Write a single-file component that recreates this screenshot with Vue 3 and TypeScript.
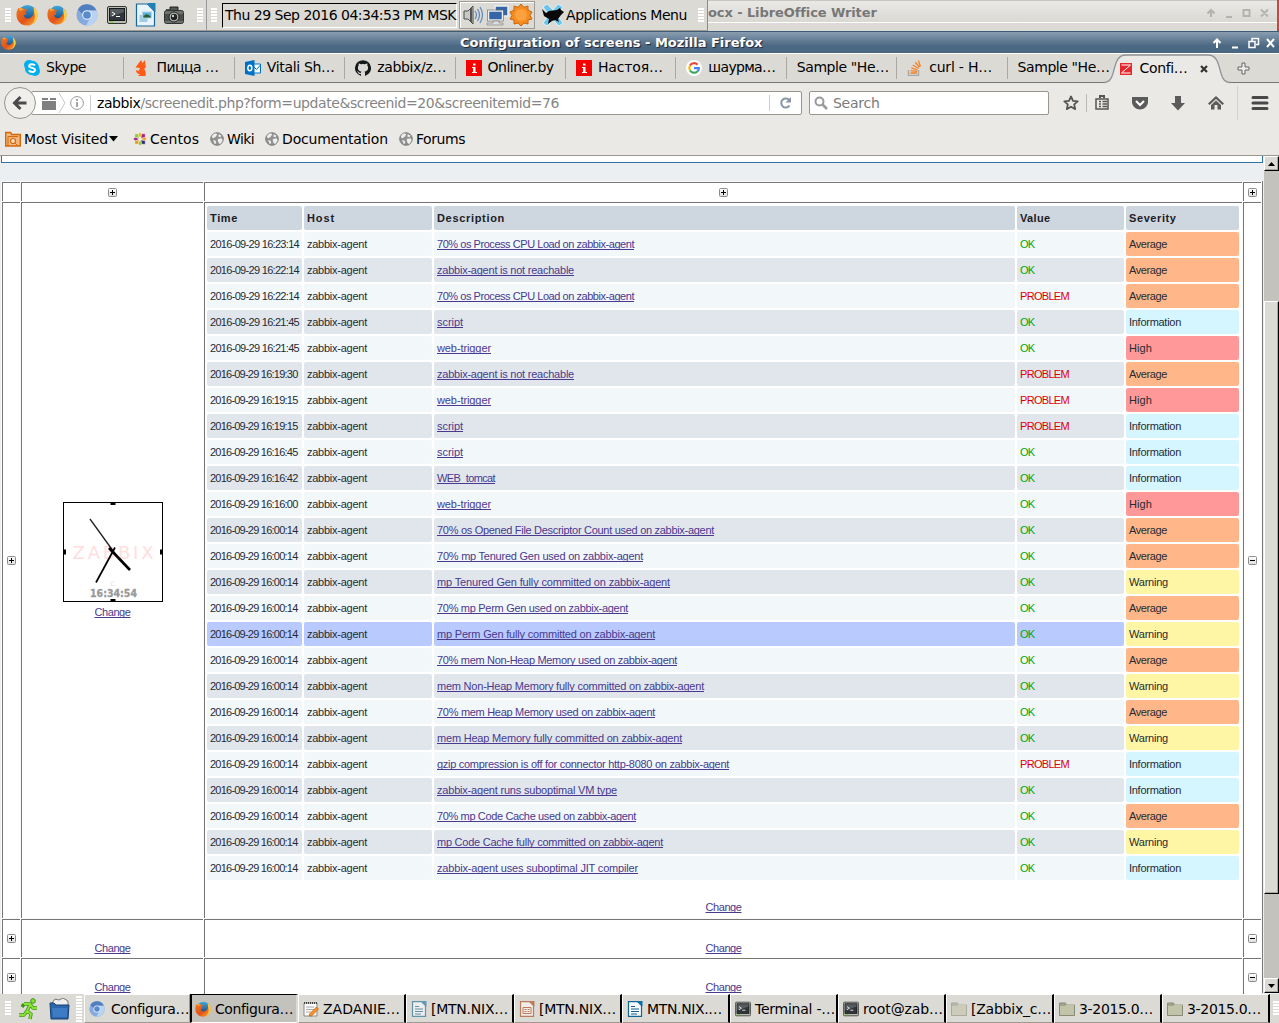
<script setup lang="ts">
interface Tab { icon: string; label: string; w: number }
interface Task { icon: string; label: string; w: number; faded?: boolean; active?: boolean }
interface EventRow { time: string; desc: string; w: number; problem: boolean; sev: Severity }
type Severity = 'Average' | 'Information' | 'High' | 'Warning'

// Adjusts letter spacing so a label takes the given advance width.
const vFit = {
  mounted(el: HTMLElement, binding: { value: number }) {
    const n = (el.textContent || '').length
    const w = el.getBoundingClientRect().width
    if (n && w) el.style.letterSpacing = ((binding.value - w) / n).toFixed(4) + 'px'
  },
}

const launchers = ['firefox', 'firefox', 'chromium', 'terminal', 'impress', 'camera']

const tabs: Tab[] = [
  { icon: 'skype', label: 'Skype', w: 40 },
  { icon: 'fox', label: 'Пицца …', w: 62 },
  { icon: 'outlook', label: 'Vitali Sh…', w: 68 },
  { icon: 'github', label: 'zabbix/z…', w: 69 },
  { icon: 'onliner', label: 'Onliner.by', w: 66 },
  { icon: 'onliner', label: 'Настоя…', w: 65 },
  { icon: 'google', label: 'шаурма…', w: 67 },
  { icon: '', label: 'Sample "He…', w: 92 },
  { icon: 'stack', label: 'curl - H…', w: 63 },
  { icon: '', label: 'Sample "He…', w: 92 },
]

const bookmarks = [
  { icon: 'centos', label: 'Centos', w: 49, x: 17 },
  { icon: 'globe', label: 'Wiki', w: 27, x: 17 },
  { icon: 'globe', label: 'Documentation', w: 106, x: 18 },
  { icon: 'globe', label: 'Forums', w: 49, x: 17 },
]

const tasks: Task[] = [
  { icon: 'chromium', label: 'Configura…', w: 78 },
  { icon: 'firefox', label: 'Configura…', w: 78, active: true },
  { icon: 'notes', label: 'ZADANIE…', w: 77 },
  { icon: 'writer', label: '[MTN.NIX…', w: 77, faded: true },
  { icon: 'impressdoc', label: '[MTN.NIX…', w: 77, faded: true },
  { icon: 'writer', label: 'MTN.NIX.…', w: 75 },
  { icon: 'terminal', label: 'Terminal -…', w: 80 },
  { icon: 'terminal', label: 'root@zab…', w: 80 },
  { icon: 'folder', label: '[Zabbix_c…', w: 80, faded: true },
  { icon: 'folder', label: '3-2015.0…', w: 74 },
  { icon: 'folder', label: '3-2015.0…', w: 74 },
]

const ev = (t: string, desc: string, w: number, sev: Severity, problem = false): EventRow =>
  ({ time: '2016-09-29 ' + t, desc, w, sev, problem })

const events: EventRow[] = [
  ev('16:23:14', '70% os Process CPU Load on zabbix-agent', 197, 'Average'),
  ev('16:22:14', 'zabbix-agent is not reachable', 137, 'Average'),
  ev('16:22:14', '70% os Process CPU Load on zabbix-agent', 197, 'Average', true),
  ev('16:21:45', 'script', 26, 'Information'),
  ev('16:21:45', 'web-trigger', 54, 'High'),
  ev('16:19:30', 'zabbix-agent is not reachable', 137, 'Average', true),
  ev('16:19:15', 'web-trigger', 54, 'High', true),
  ev('16:19:15', 'script', 26, 'Information', true),
  ev('16:16:45', 'script', 26, 'Information'),
  ev('16:16:42', 'WEB_tomcat', 58, 'Information'),
  ev('16:16:00', 'web-trigger', 54, 'High'),
  ev('16:00:14', '70% os Opened File Descriptor Count used on zabbix-agent', 277, 'Average'),
  ev('16:00:14', '70% mp Tenured Gen used on zabbix-agent', 206, 'Average'),
  ev('16:00:14', 'mp Tenured Gen fully committed on zabbix-agent', 233, 'Warning'),
  ev('16:00:14', '70% mp Perm Gen used on zabbix-agent', 191, 'Average'),
  ev('16:00:14', 'mp Perm Gen fully committed on zabbix-agent', 218, 'Warning'),
  ev('16:00:14', '70% mem Non-Heap Memory used on zabbix-agent', 240, 'Average'),
  ev('16:00:14', 'mem Non-Heap Memory fully committed on zabbix-agent', 267, 'Warning'),
  ev('16:00:14', '70% mem Heap Memory used on zabbix-agent', 218, 'Average'),
  ev('16:00:14', 'mem Heap Memory fully committed on zabbix-agent', 245, 'Warning'),
  ev('16:00:14', 'gzip compression is off for connector http-8080 on zabbix-agent', 292, 'Information', true),
  ev('16:00:14', 'zabbix-agent runs suboptimal VM type', 180, 'Information'),
  ev('16:00:14', '70% mp Code Cache used on zabbix-agent', 199, 'Average'),
  ev('16:00:14', 'mp Code Cache fully committed on zabbix-agent', 226, 'Warning'),
  ev('16:00:14', 'zabbix-agent uses suboptimal JIT compiler', 201, 'Information'),
]
const hovered = 15
const sevWidth: Record<Severity, number> = { Average: 38, Information: 52, High: 23, Warning: 39 }
const timeWidth = (t: string) => (t.includes('16:00') || t.includes('16:19') || t.includes('16:16') ? 87.5 : 89)
</script>

<template>
  <svg class="defs" width="0" height="0">
    <defs>
      <linearGradient id="gOr" x1="0" y1="0" x2="1" y2="1"><stop offset="0" stop-color="#ee7b1c" /><stop offset=".55" stop-color="#e4521b" /><stop offset="1" stop-color="#f9b233" /></linearGradient>
      <linearGradient id="gBl" x1="0" y1="0" x2="0" y2="1"><stop offset="0" stop-color="#3fa9dd" /><stop offset="1" stop-color="#15386f" /></linearGradient>
      <linearGradient id="gPm" x1="0" y1="0" x2="0" y2="1"><stop offset="0" stop-color="#fff" /><stop offset="1" stop-color="#ddd" /></linearGradient>
    </defs>
    <symbol id="firefox" viewBox="0 0 24 24">
      <circle cx="12.5" cy="11" r="10" fill="url(#gBl)" />
      <path d="M19 3c3 3 4.600 6 4.400 10C23 19 18 23.500 12 23.500 5 23.500.500 18 .500 12c0-4 1-6 2.500-8l1 2c1-1 2.500-1.200 4-.5 1.500-.5 3 0 4 1.500L10 9c2 1 1 3-1.500 3 0 3 3 4.500 6 3.500 3-1 5-4 5-7z" fill="url(#gOr)" />
      <path d="M19 3c3 3 4.600 6 4.400 10-.4 4-3 8-7 9.500 4-3 5-7 3.500-13z" fill="#fbd23c" />
      <path d="M3 5l1.500 2.500L9 6 5.500 4z" fill="#f9a13a" />
    </symbol>
    <symbol id="chromium" viewBox="0 0 24 24">
      <circle cx="12" cy="12" r="11.500" fill="#85aadd" />
      <path d="M2 6a11.500 11.500 0 0 1 20.300 1H12a5 5 0 0 0-5 4z" fill="#527fc0" />
      <path d="M22.300 7A11.500 11.500 0 0 1 11 23.500l5-9c1.500-2.500.5-6-2-7.500z" fill="#b9d2f2" />
      <circle cx="12" cy="12" r="5.300" fill="#eef4fc" /><circle cx="12" cy="12" r="4.200" fill="#588bce" />
    </symbol>
    <symbol id="terminal" viewBox="0 0 20 20">
      <rect x=".5" y="1.500" width="19" height="17" rx="1.500" fill="#babdb6" stroke="#333631" />
      <rect x="2.500" y="3.500" width="15" height="12" fill="#30353a" stroke="#16191b" />
      <path d="M3 4h14v3L3 12z" fill="#565c60" /><path d="M5 7l3 2-3 2M9 11.500h4" fill="none" stroke="#fff" /><path d="M2.500 17h4" stroke="#73d216" />
    </symbol>
    <symbol id="impress" viewBox="0 0 20 24">
      <path d="M1 1h11l7 7v15H1z" fill="#e8f4fa" stroke="#17679b" stroke-width="1.200" /><path d="M12 0h8v9z" fill="#1b82b8" />
      <rect x="4" y="12" width="8" height="7" fill="#9fcde7" /><rect x="7" y="9" width="9" height="6" fill="#57b3df" stroke="#b5d8e8" /><path d="M8 13l3-2 4 2v1.500H8z" fill="#305e2c" />
    </symbol>
    <symbol id="camera" viewBox="0 0 20 18">
      <path d="M6 4V1h8v3" fill="#555753" stroke="#222" /><path d="M2 3h4v2H2z" fill="#4e514c" />
      <rect x=".5" y="4.500" width="19" height="13" rx="2" fill="#6f726c" stroke="#2e3436" /><path d="M1 8h18v7H1z" fill="#4b4e49" />
      <circle cx="10" cy="11" r="5" fill="#b5b8b2" stroke="#222" /><circle cx="10" cy="11" r="3.200" fill="#222" /><circle cx="9" cy="10" r="1.200" fill="#ccc" />
    </symbol>
    <symbol id="skype" viewBox="0 0 16 16"><circle cx="5" cy="5" r="5" fill="#00aff0" /><circle cx="11" cy="11" r="5" fill="#00aff0" /><circle cx="8" cy="8" r="7.200" fill="#00aff0" /><path d="M11 5.400C9.500 3.600 5.200 3.800 5.200 6c0 2.400 5.800 1.400 5.800 4 0 2.400-4.600 2.500-6.200.4" fill="none" stroke="#fff" stroke-width="2" /></symbol>
    <symbol id="fox" viewBox="0 0 16 16"><path d="M7 0l1.500 3L11 0l.5 5c1 2-.5 3.500-1.500 4 2 1.500 2 4.500 1.500 7H4l2-2c-3 0-4-2-4-4l2.500 1L6 8 1.500 7.500z" fill="#ff5a16" /></symbol>
    <symbol id="outlook" viewBox="0 0 16 16"><path d="M9 4h6.500v9H9" fill="#fff" stroke="#0072c6" /><path d="M9 7l2.500 2.500L15.500 5" fill="none" stroke="#0072c6" /><path d="M0 2l9.500-2v16L0 14z" fill="#0072c6" /><ellipse cx="4.800" cy="8" rx="2" ry="2.700" fill="none" stroke="#fff" stroke-width="1.500" /></symbol>
    <symbol id="github" viewBox="0 0 16 16"><path d="M8 .2A8 8 0 0 0 5.500 15.800c.4 0 .5-.2.500-.4v-1.500c-2.200.5-2.700-1-2.700-1-.4-.9-.9-1.200-.9-1.200-.7-.5.100-.5.100-.5.800.1 1.200.8 1.200.8.700 1.200 1.900.9 2.300.7.100-.5.300-.9.500-1.100-1.800-.2-3.600-.9-3.600-4 0-.9.300-1.600.8-2.100 0-.2-.3-1 .1-2.100 0 0 .7-.2 2.200.8a7.600 7.600 0 0 1 4 0c1.500-1 2.200-.8 2.200-.8.400 1.100.1 1.900.1 2.100.5.600.8 1.300.8 2.100 0 3.100-1.900 3.800-3.700 4 .3.200.6.700.6 1.500v2.300c0 .2.100.5.500.4A8 8 0 0 0 8 .2z" fill="#15191c" /></symbol>
    <symbol id="onliner" viewBox="0 0 16 16"><path d="M0 0h16v16H0z" fill="#f60000" /><path d="M7 3.500h2.500v2H7zM6 7h3.500v5H11v1H6v-1h1V8H6z" fill="#fff" /></symbol>
    <symbol id="google" viewBox="0 0 16 16"><circle cx="8" cy="8" r="8" fill="#fff" /><g fill="none" stroke-width="2.200"><path d="M4 5.500A4.800 4.800 0 0 1 11.500 4.600" stroke="#ea4335" /><path d="M4 5.500a5 5 0 0 0 0 5" stroke="#fbbc05" /><path d="M4 10.500a4.800 4.800 0 0 0 7.300 1" stroke="#34a853" /><path d="M11.300 11.500c1-.8 1.500-2 1.500-3.300H8" stroke="#4285f4" /></g></symbol>
    <symbol id="stack" viewBox="0 0 16 16"><path d="M1.500 10v5.500h10V10" fill="none" stroke="#a6a9ac" stroke-width="1.400" /><path d="M3.500 13h6.500M3.600 10.600l6.500.8M4.300 7.900l6.200 2.100M5.800 5l5.600 3.500M8.200 2.200l4.400 5M11.300.5l2.200 6" stroke="#f48024" stroke-width="1.300" /></symbol>
    <symbol id="centos" viewBox="0 0 16 16">
      <g stroke="#fff" stroke-width=".5"><path d="M8 0l2.500 3L8 7 5.500 3z" fill="#f0b429" /><path d="M16 8l-3 2.500L9 8l4-2.500z" fill="#f0a429" /><path d="M8 16l-2.500-3L8 9l2.500 4z" fill="#93c83d" /><path d="M0 8l3-2.500L7 8l-4 2.500z" fill="#a1267d" /><path d="M2 2h4l1 5-5-1z" fill="#93c83d" /><path d="M14 2v4l-5 1 1-5z" fill="#a1267d" /><path d="M14 14h-4L9 9l5 1z" fill="#312d7c" /><path d="M2 14v-4l5-1-1 5z" fill="#d8a329" /></g>
    </symbol>
    <symbol id="globe" viewBox="0 0 16 16"><circle cx="8" cy="8" r="7.200" fill="#929292" stroke="#777" /><path d="M3 3.500C6 1 8 1.500 8 3L6.500 5.500 4 7 2 6zM9 8l4-1 1.500 2-2 4-2 .5L9 10.500zM3.500 9l3 1 .5 2.500L5.500 14zM10 2.500l3 1.500-1 2-2.500-1z" fill="#eee" /></symbol>
    <symbol id="notes" viewBox="0 0 16 16"><path d="M1 2h13v13H1z" fill="#fcfcfc" stroke="#888" /><path d="M1 2h13" stroke="#444" stroke-width="2" stroke-dasharray="1 1" /><path d="M3 6h8M3 8.500h8M3 11h5" stroke="#aaa" /><path d="M13.500 6l2 2-7 7H6.500v-2z" fill="#f79321" stroke="#c05c0c" stroke-width=".7" /></symbol>
    <symbol id="writer" viewBox="0 0 16 16"><path d="M1.500.600h9l4 4v10.800h-13z" fill="#f8fcff" stroke="#106494" stroke-width="1.200" /><path d="M10 0h5.500v5.500z" fill="#106fa5" /><path d="M4 5.500h4M4 8h8M4 10.500h8M4 13h6" stroke="#155f8c" /></symbol>
    <symbol id="impressdoc" viewBox="0 0 16 16"><path d="M1.500.600h9l4 4v10.800h-13z" fill="#fff8f4" stroke="#a23e12" stroke-width="1.200" /><path d="M10 0h5.500v5.500z" fill="#a23e12" /><path d="M4 6.500h8v6H4zM5.500 8.500h2M8.500 8.500h2M5.500 10.500h2M8.500 10.500h2" fill="none" stroke="#a23e12" /></symbol>
    <symbol id="folder" viewBox="0 0 16 16"><path d="M.5 2h6l1 2h8v10.500H.5z" fill="#a1a38b" stroke="#888b78" /><path d="M1 5h5l1.500-1.500H15V14H1z" fill="#c2c4aa" /></symbol>
    <symbol id="plus" viewBox="0 0 9 9"><rect x=".5" y=".5" width="8" height="8" rx="1" fill="url(#gPm)" stroke="#8c8c8c" /><path d="M2 4.500h5M4.500 2v5" stroke="#000" /></symbol>
    <symbol id="minus" viewBox="0 0 9 9"><rect x=".5" y=".5" width="8" height="8" rx="1" fill="url(#gPm)" stroke="#8c8c8c" /><path d="M2 4.500h5" stroke="#000" /></symbol>
  </svg>

  <div class="desktop">
    <!-- desktop panel with the window behind it -->
    <div class="top">
      <div class="panel">
        <i class="grip g1"></i>
        <div class="launch">
          <svg v-for="(l, i) in launchers" :key="i" :class="['l' + i]"><use :href="'#' + l" /></svg>
        </div>
        <i class="grip g2"></i><i class="vsep"></i><i class="grip g3"></i>
        <div class="clock"><span v-fit="231">Thu 29 Sep 2016 04:34:53 PM MSK</span></div>
        <div class="tray">
          <svg width="70" height="24" viewBox="0 0 70 24">
            <path d="M1 8h4l5-5v18l-5-5H1z" fill="#c7c9c4" stroke="#4b4e4a" /><path d="M8 5v14" stroke="#555" stroke-width="2" />
            <path d="M12 8q3 4 0 8M14.500 6q4 6 0 12M17 4q5 8 0 16" fill="none" stroke="#5c86b8" stroke-width="1.200" />
            <rect x="32" y="3" width="13" height="10" fill="#3465a4" stroke="#eee" stroke-width="1.500" /><rect x="25.500" y="8" width="14" height="9" fill="#3465a4" stroke="#eee" stroke-width="1.500" /><rect x="24.500" y="7" width="16" height="11" fill="none" stroke="#666" stroke-width=".6" /><path d="M30 18h6v2h4v2H24v-2h6z" fill="#ddd" stroke="#777" stroke-width=".6" />
            <path d="M58 1l2.800 3.300L65 3v4.200L69 9l-2 3.500 2 3.500-4 1v4l-4-1-3 3-3-3-4 1v-4l-4-1 2-3.500L47 9l4-1.800V3l4.200 1.300z" fill="#f68b1f" stroke="#c9650d" /><circle cx="58" cy="12" r="6" fill="#fba13d" />
          </svg>
        </div>
        <svg class="xfce" width="22" height="22" viewBox="0 0 22 22"><path d="M1 3l4-3 6 6 5-6 5 3-6 8 6 8-4 3-6-6-6 6-4-3 6-8z" fill="#6dc3e8" stroke="#d7f1fb" /><path d="M0 5l4 4 3-2 8-1 3-2 1 2 3 2-3 3-3 4 1 3-4-2-3 1-4 3 1-5-5-3z" fill="#080808" /></svg>
        <span class="apps"><span v-fit="121">Applications Menu</span></span>
        <i class="grip g4"></i>
      </div>
      <div class="behind">
        <div class="btitle">
          <b v-fit="167.500">ocx - LibreOffice Writer</b>
          <svg width="64" height="14" viewBox="0 0 64 14" fill="none" stroke="#b5b3ae" stroke-width="2"><path d="M5 11V4M1.500 7.500L5 4l3.500 3.500M20 11h6M37.500 4h6v6h-6zM55 3.500l7 7M62 3.500l-7 7" /></svg>
        </div>
      </div>
    </div>

    <div class="title">
      <svg width="15" height="15"><use href="#firefox" /></svg>
      <b v-fit="302">Configuration of screens - Mozilla Firefox</b>
      <svg class="wb" width="66" height="14" viewBox="0 0 66 14" fill="none" stroke="#fff" stroke-width="2"><path d="M5 12V4M1.500 7L5 3.500 8.500 7M20 11.500h6" /><path d="M40 5V2.500h6.500v6H44M37 5.500h6v6h-6z" stroke-width="1.500" /><path d="M55 3l7 8M62 3l-7 8" /></svg>
    </div>

    <div class="tabs">
      <div v-for="(t, i) in tabs" :key="i" class="tab" :class="{ last: i === 9 }">
        <svg v-if="t.icon" width="16" height="16"><use :href="'#' + t.icon" /></svg>
        <span v-fit="t.w">{{ t.label }}</span>
      </div>
      <div class="active">
        <svg class="curve" width="128" height="30" viewBox="0 0 128 30"><path d="M0 28.500C14 28.500 6 1 22 1h82c16 0 8 27.500 22 27.500V30H0z" fill="#eae9e5" /><path d="M0 28.500C14 28.500 6 1 22 1h82c16 0 8 27.500 22 27.500" fill="none" stroke="#8e9398" stroke-width="1.300" /></svg>
        <div class="acontent">
          <svg width="12" height="12" viewBox="0 0 12 12"><path d="M0 0h12v12H0z" fill="#e8262d" /><path d="M1.500 2h9L1.500 10h9" fill="none" stroke="#fff" /></svg>
          <span v-fit="48">Confi…</span>
          <svg class="close" width="8" height="8" viewBox="0 0 8 8"><path d="M1 1l6 6M7 1L1 7" stroke="#333" stroke-width="2.200" /></svg>
        </div>
      </div>
      <svg class="newtab" width="13" height="13" viewBox="0 0 13 13"><path d="M5 1h3v4h4v3H8v4H5V8H1V5h4z" fill="#eee" stroke="#666" /></svg>
    </div>

    <div class="nav">
      <div class="back"><svg width="16" height="16" viewBox="0 0 16 16"><path d="M8.500 2L2.500 8l6 6M3 8h11.500" fill="none" stroke="#4b4b4b" stroke-width="3" /></svg></div>
      <div class="url">
        <svg width="56" height="22" viewBox="0 0 56 22"><path d="M7 6h6v2H7zM15 6h6v2h-6zM7 9h14v9H7z" fill="#808080" /><path d="M24 1l6 10-6 10" fill="none" stroke="#c8c8c8" /><circle cx="42" cy="11" r="6.400" fill="none" stroke="#999" /><path d="M42 7v2M42 10v5" stroke="#888" stroke-width="1.500" /><path d="M55.500 3v16" stroke="#ccc" /></svg>
        <span class="addr" v-fit="462"><em>zabbix</em>/screenedit.php?form=update&amp;screenid=20&amp;screenitemid=76</span>
        <svg class="reload" width="32" height="22" viewBox="0 0 32 22"><path d="M.5 3v16" stroke="#ccc" /><path d="M20.500 13.500a4.500 4.500 0 1 1 0-5" fill="none" stroke="#8795a5" stroke-width="2" /><path d="M22 5v5.500h-5.500z" fill="#8795a5" /></svg>
      </div>
      <div class="search"><svg width="14" height="14" viewBox="0 0 14 14" fill="none" stroke="#999" stroke-width="2"><circle cx="5.500" cy="5.500" r="4" /><path d="M8.500 8.500L13 13" stroke-width="2.500" /></svg><span v-fit="46.500">Search</span></div>
      <svg class="tools" width="216" height="34" viewBox="0 0 216 34">
        <g fill="none" stroke="#555" stroke-width="2">
          <path d="M9 10.500l2 4.300 4.700.5-3.500 3.100 1 4.700L9 20.700l-4.200 2.400 1-4.700-3.500-3.100 4.700-.5z" stroke-width="1.800" stroke-linejoin="round" />
          <path d="M34 13h12v10H34zM37 15.500h2M40.500 15.500H45M37 18h2M40.500 18H45M37 20.500h2M40.500 20.500H45" stroke-width="1.500" /><path d="M38 12v-2h4v2" />
          <path d="M191 11.500h14M191 17h14M191 22.500h14" stroke="#484848" stroke-width="3" stroke-linecap="round" />
        </g>
        <path d="M24.500 8v18" stroke="#bbb" /><path d="M175.500 0v34" stroke="#d4d2ce" />
        <path d="M70 11h16v5c0 4-4 7.500-8 7.500s-8-3.500-8-7.500z" fill="#5b5b5b" /><path d="M74 15l4 4 4-4" fill="none" stroke="#fff" stroke-width="2" />
        <path d="M113 10h6v7h4l-7 7.500-7-7.500h4z" fill="#5b5b5b" />
        <path d="M154 10l8 7.500-1.500 1.500L154 13l-6.500 6-1.500-1.500z" fill="#5b5b5b" /><path d="M154 14.500l5 4.500v4.500h-3.500V19h-3v4.500H149V19z" fill="#5b5b5b" />
      </svg>
    </div>

    <div class="marks">
      <svg width="16" height="16" viewBox="0 0 16 16"><path d="M.7 1.500h5l1 2h8.600V15H.7z" fill="#f1b77c" stroke="#d5670b" stroke-width="1.400" /><path d="M3 5.500h10M3 5.500V15" stroke="#d5670b" /><circle cx="8" cy="10" r="2.500" fill="#fde3c7" stroke="#d5670b" stroke-width="1.200" /><path d="M10 12l3 3" stroke="#d5670b" /></svg>
      <span class="mv"><span v-fit="84">Most Visited</span></span>
      <svg class="dd" width="9" height="6" viewBox="0 0 9 6"><path d="M0 0h9L4.500 5.500z" /></svg>
      <div v-for="(b, i) in bookmarks" :key="i" class="mark" :class="'m' + i">
        <svg width="14" height="14"><use :href="'#' + b.icon" /></svg><span v-fit="b.w">{{ b.label }}</span>
      </div>
    </div>

    <div class="view">
      <div class="page">
        <div class="tail"></div>
        <div class="screen">
          <div class="cell"></div>
          <div class="cell mid"><svg class="pm"><use href="#plus" /></svg></div>
          <div class="cell mid"><svg class="pm"><use href="#plus" /></svg></div>
          <div class="cell mid"><svg class="pm"><use href="#plus" /></svg></div>

          <div class="cell mid"><svg class="pm"><use href="#plus" /></svg></div>
          <div class="cell mid clk">
            <svg width="100" height="100" viewBox="0 0 100 100">
              <rect x=".5" y=".5" width="99" height="99" fill="#fff" stroke="#000" />
              <text x="9.500" y="57" font-size="18" fill="#ffdede" textLength="81">ZABBIX</text>
              <text x="47.500" y="84" font-size="6" fill="#ddd">C</text>
              <text x="27" y="94.500" font-size="10" font-weight="bold" fill="#999" stroke="#999" stroke-width=".3" textLength="47" lengthAdjust="spacingAndGlyphs">16:34:54</text>
              <path d="M47.500 1h5v2h-5zM47.500 97h5v2h-5zM1 47.500h2v5H1zM97 47.500h2v5h-2z" />
              <path d="M27 17l26 36" stroke="#222" stroke-width="1.300" /><path d="M33 80.500L52 45.500" stroke="#000" stroke-width="1.700" /><path d="M46 46l21 22" stroke="#000" stroke-width="2.600" />
            </svg>
            <a v-fit="36">Change</a>
          </div>
          <div class="cell events">
            <div class="row head">
              <b><span v-fit="28">Time</span></b><b><span v-fit="28">Host</span></b><b><span v-fit="68">Description</span></b><b><span v-fit="30.500">Value</span></b><b><span v-fit="47.500">Severity</span></b>
            </div>
            <div v-for="(e, i) in events" :key="i" class="row" :class="{ even: i % 2 === 1, hover: i === hovered }">
              <div><span v-fit="timeWidth(e.time)">{{ e.time }}</span></div>
              <div><span v-fit="60">zabbix-agent</span></div>
              <div><a v-fit="e.w">{{ e.desc }}</a></div>
              <div :class="e.problem ? 'bad' : 'ok'"><span v-fit="e.problem ? 49 : 14.500">{{ e.problem ? 'PROBLEM' : 'OK' }}</span></div>
              <div :class="e.sev"><span v-fit="sevWidth[e.sev]">{{ e.sev }}</span></div>
            </div>
            <div class="chg"><a v-fit="36">Change</a></div>
          </div>
          <div class="cell mid"><svg class="pm"><use href="#minus" /></svg></div>

          <template v-for="r in 2" :key="r">
            <div class="cell mid"><svg class="pm"><use href="#plus" /></svg></div>
            <div class="cell low"><a v-fit="36">Change</a></div>
            <div class="cell low"><a v-fit="36">Change</a></div>
            <div class="cell mid"><svg class="pm"><use href="#minus" /></svg></div>
          </template>
        </div>
      </div>
      <div class="scroll">
        <div class="sb"><svg width="7" height="4"><path d="M0 4h7L3.500 0z" /></svg></div>
        <div class="thumb"></div>
        <div class="sb"><svg width="7" height="4"><path d="M0 0h7L3.500 4z" /></svg></div>
      </div>
    </div>

    <div class="taskbar">
      <i class="grip t1"></i>
      <svg class="run" width="22" height="22" viewBox="0 0 22 22"><path d="M6 6h6l3 4h4M12 7l-3 6 4 3-1 5M9 13l-3 4H1M6 6L4 9" fill="none" stroke="#3a9410" stroke-width="3.400" stroke-linejoin="round" /><path d="M6 6h6l3 4h4M12 7l-3 6 4 3-1 5M9 13l-3 4H1" fill="none" stroke="#8ae234" stroke-width="1.800" /><circle cx="15" cy="3" r="2.300" fill="#8ae234" stroke="#3a9410" /></svg>
      <svg class="bin" width="22" height="22" viewBox="0 0 22 22"><path d="M3 5l3-4 4 1 4-2 5 3v6H3z" fill="#eee" stroke="#777" /><path d="M1 5h4l2 2h13l-1 14H2z" fill="#2b66ad" stroke="#163f72" /><path d="M3 10h15v9H4z" fill="#3d7cc4" /></svg>
      <i class="grip t2"></i>
      <div v-for="(t, i) in tasks" :key="i" class="task" :class="{ active: t.active, first: i === 0 }">
        <svg width="16" height="16" :class="{ faded: t.faded }"><use :href="'#' + t.icon" /></svg>
        <span v-fit="t.w">{{ t.label }}</span>
      </div>
      <i class="grip t3"></i>
    </div>
  </div>
</template>

<style>
html, body { margin: 0; overflow: hidden; }
</style>

<style scoped>
.defs { display: block; height: 0; }
.desktop { width: 1279px; height: 1023px; overflow: hidden; display: flex; flex-direction: column; font: 14px/18px "DejaVu Sans", sans-serif; color: #000; background: #dcdad5; white-space: nowrap; }
svg { display: block; flex: none; }
span, a { flex: none; }
.grip { flex: none; width: 6px; height: 15px; background-image: radial-gradient(circle at 1px 1px, #fff 0 .8px, transparent 1px), radial-gradient(circle at 1px 1px, #aaa69f 0 .6px, transparent .8px); background-size: 2px 3px; }

.top { height: 31px; flex: none; display: flex; }
.panel { width: 708px; box-sizing: border-box; height: 31px; border-right: 1px solid #8f897f; border-bottom: 1px solid #a09a90; display: flex; align-items: center; flex: none; }
.g1 { margin-left: 5px; }
.launch { display: flex; align-items: center; width: 178px; margin-left: 5px; }
.launch svg { width: 22px; height: 22px; margin-right: 8px; }
.launch .l1 { width: 20px; height: 20px; margin: 0 9px 0 1px; }
.launch .l3 { width: 20px; height: 20px; margin-left: 1px; }
.launch .l4 { width: 21px; height: 24px; }
.launch .l5 { width: 20px; height: 18px; margin: 0; }
.g2 { margin-left: 3px; }
.vsep { width: 1px; height: 31px; background: #999; margin-left: 3px; }
.g3 { margin-left: 4px; }
.clock { box-sizing: border-box; width: 235px; height: 25px; margin-left: 5px; border: 1px solid; border-color: #000 #fff #fff #000; line-height: 23px; padding-left: 2px; }
.tray { box-sizing: border-box; width: 76px; height: 28px; border: 1px solid #a09a90; box-shadow: inset 1px 1px #fff; margin-left: 2px; display: flex; align-items: center; padding-left: 3px; }
.xfce { margin-left: 7px; }
.apps { margin-left: 2px; }
.g4 { margin-left: 11px; }
.behind { flex: 1; height: 31px; border-right: 2px solid #c04a45; box-sizing: border-box; }
.btitle { box-sizing: border-box; height: 23px; border-top: 1px solid #c8c6c1; border-bottom: 1px solid #fff; background: linear-gradient(#eae9e6, #dad8d3); display: flex; align-items: center; justify-content: space-between; padding: 2px 7px 0 0; font-size: 13px; color: #777; }

.title { box-sizing: border-box; height: 23px; flex: none; border-top: 1px solid #3f5c76; border-bottom: 1px solid #fff; background: linear-gradient(#8a9db0, #4c6984 65%, #4a6782); color: #fff; font-size: 13px; display: flex; align-items: center; text-shadow: 1px 1px 1px #223; }
.title > svg:first-child { margin-left: 1px; }
.title b { margin-left: 444px; padding-top: 1px; }
.wb { margin-left: auto; margin-right: 1px; }

.tabs { height: 28px; flex: none; display: flex; align-items: center; border-bottom: 1px solid #777; padding-left: 14px; font-size: 14px; }
.tab { box-sizing: border-box; width: 110.400px; height: 22px; flex: none; display: flex; align-items: center; padding-left: 10px; gap: 6px; border-right: 1px solid #aaa8a3; }
.tab span { position: relative; top: -1px; }
.tab.last { border: 0; width: 98px; }
.active { position: relative; flex: none; }
.tabs .active { width: 124px; height: 28px; }
.curve { position: absolute; left: -2px; top: 0; }
.acontent { position: relative; display: flex; align-items: center; height: 29px; padding-left: 14px; }
.acontent span { margin-left: 8px; position: relative; top: -1px; }
.close { margin-left: 12px; }
.newtab { margin-left: 7px; }

.nav { height: 40px; flex: none; display: flex; align-items: center; background: #eae9e5; padding-left: 4px; }
.back { box-sizing: border-box; width: 32px; height: 32px; border: 1px solid #96948f; border-radius: 16px; background: #f0efec; display: flex; align-items: center; justify-content: center; z-index: 1; }
.url { box-sizing: border-box; width: 771px; height: 24px; margin-left: -5px; background: #fff; border: 1px solid #9a958d; border-radius: 2px; display: flex; align-items: center; padding-left: 3px; color: #858585; flex: none; }
.addr { margin-left: 6px; }
.addr em { font-style: normal; color: #000; }
.reload { margin-left: auto; }
.search { box-sizing: border-box; width: 240px; height: 24px; margin-left: 7px; background: #fff; border: 1px solid #9a958d; border-radius: 2px; display: flex; align-items: center; gap: 5px; padding-left: 4px; color: #7b7b7b; flex: none; }
.tools { margin-left: 13px; }

.marks { box-sizing: border-box; height: 33px; flex: none; background: #eae9e5; border-bottom: 1px solid #9c9790; display: flex; align-items: center; padding-left: 5px; }
.mv { margin-left: 3px; }
.dd { margin-left: 1px; }
.mark { display: flex; align-items: center; gap: 3px; }
.m0 { margin-left: 15px; }
.m1, .m2, .m3 { margin-left: 11px; }

.view { height: 838px; flex: none; display: flex; background: #ebeff2; font: 11px/14px "Liberation Sans", Arial, sans-serif; overflow: hidden; }
.page { width: 1264px; flex: none; display: flex; flex-direction: column; }
.tail { box-sizing: border-box; width: 1262px; height: 7px; margin-left: 1px; background: #fff; border: solid #2f74a6; border-width: 0 1px 1px; flex: none; }
.screen { box-sizing: border-box; width: 1262px; height: 812px; margin: 18px 0 0 1px; padding: 1px 0 0 1px; background: #fbfbfb; border-right: 1px solid #78797a; display: grid; grid-template-columns: 18px 182px 1038px 18px; grid-template-rows: 19px 716px 38px 38px; gap: 1px; flex: none; }
.cell { background: #fff; border: solid #767676; border-width: 1px 0 0 1px; min-width: 0; min-height: 0; overflow: hidden; }
.mid { display: flex; flex-direction: column; align-items: center; justify-content: center; }
.pm { width: 9px; height: 9px; }
.clk text { font-family: "DejaVu Sans", sans-serif; }
.clk a { margin-top: 3px; }
a { color: #49398f; text-decoration: underline; text-decoration-thickness: 1px; text-underline-offset: 1px; text-decoration-skip-ink: none; }
.events { padding: 3px 2px 0; }
.row { display: grid; grid-template-columns: 95px 128px 581px 107px 113px; gap: 2px; height: 24px; margin-bottom: 2px; line-height: 24px; color: #1f2c33; }
.row > * { background: #f2f7fa; border-radius: 2px; padding-left: 3px; }
.row.even > * { background: #e1e6ed; }
.row.hover > * { background: #b8caff; }
.head > b { background: #ced6e0; color: #1c2024; }
.row .ok { color: #00a800; }
.row .bad { color: #dc0000; }
.row .Average { background: #ffb689; }
.row .Information { background: #d6f6ff; }
.row .High { background: #ff9999; }
.row .Warning { background: #fff6a5; }
.chg { text-align: center; margin-top: 20px; }
.low { text-align: center; padding-top: 21px; }

.scroll { box-sizing: border-box; width: 15px; height: 837px; background: #c4c2bc; display: flex; flex-direction: column; justify-content: space-between; }
.sb, .thumb { box-sizing: border-box; width: 15px; height: 15px; background: #dcdad5; border: 1px solid; border-color: #fff #000 #000 #fff; display: flex; align-items: center; justify-content: center; box-shadow: inset -1px -1px #aaa69e; }
.thumb { height: 593px; margin-top: 46px; }

.taskbar { height: 29px; flex: none; display: flex; align-items: center; background: #dcdad5; }
.t1 { margin-left: 5px; }
.run { margin-left: 7px; }
.bin { margin-left: 9px; }
.t2 { margin-left: 5px; height: 26px; }
.task { box-sizing: border-box; width: 108px; height: 29px; flex: none; border: solid; border-width: 1px 2px 1px 1px; border-color: #fff #000 #9f998f #fff; display: flex; align-items: center; gap: 4px; padding-left: 4px; }
.task.first { width: 106px; margin-left: 2px; border-right-width: 1px; border-right-color: #9f998f; }
.task.first svg { margin-right: 2px; }
.task.active { background: #c4c2bd; border-color: #000 #dcdad5 #fff #000; border-left-width: 2px; padding-left: 3px; }
.task span { margin-left: 0; }
.faded { opacity: .6; }
.t3 { margin-left: 3px; }
</style>
